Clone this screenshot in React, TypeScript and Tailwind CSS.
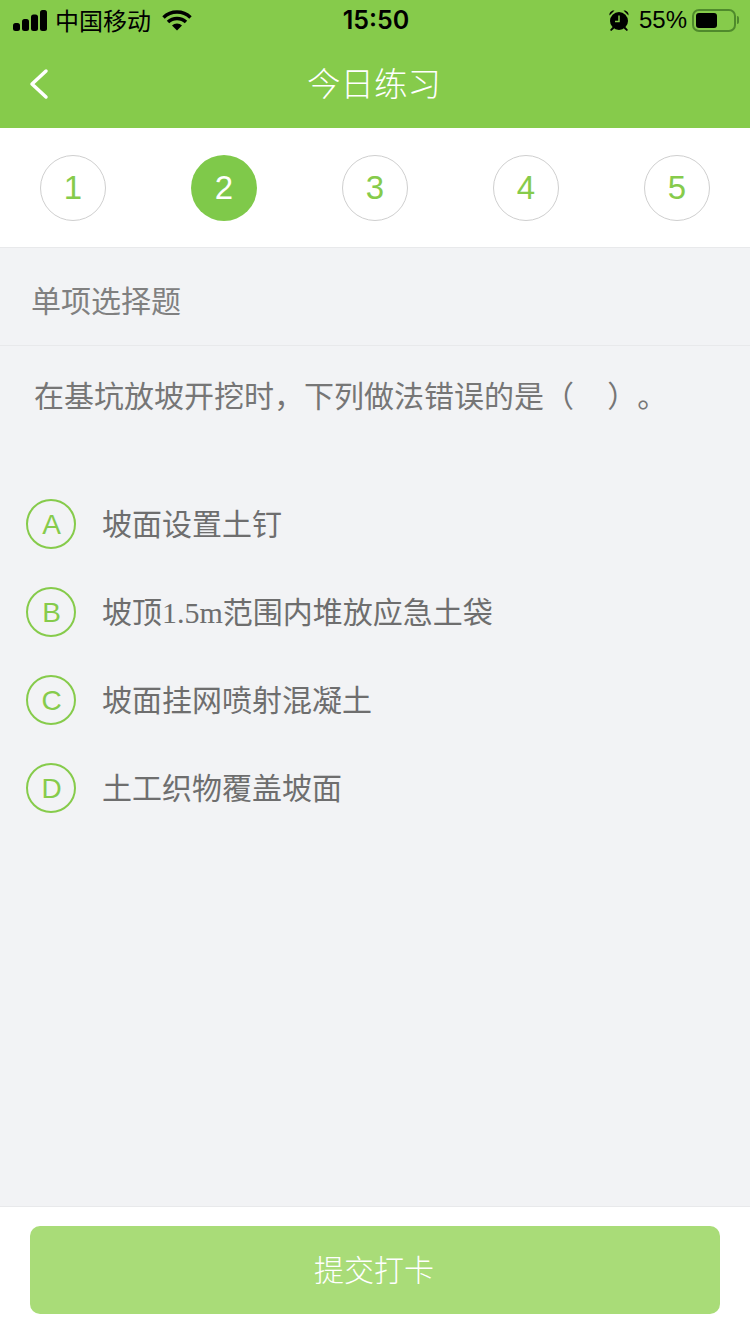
const sans = "font-['Liberation_Sans','Noto_Sans_CJK_SC',sans-serif]";

const StatusBar = () => (
  <div className="flex items-center justify-between h-10 pl-[13px] pr-[11px] text-black">
    <div className="flex items-center flex-1">
      <svg width="34" height="21" viewBox="0 0 34 21" fill="currentColor">
        <rect x="0" y="13" width="7" height="8" rx="2.500" />
        <rect x="9" y="9" width="7" height="12" rx="2.500" />
        <rect x="18" y="4.500" width="7" height="16.500" rx="2.500" />
        <rect x="27" y="0" width="7" height="21" rx="2.500" />
      </svg>
      <span className="ml-2 text-[24px] leading-none font-['Noto_Sans_CJK_SC',sans-serif]">中国移动</span>
      <svg className="ml-[11px]" width="30" height="22" viewBox="0 0 30 22" fill="none" stroke="currentColor">
        <path d="M1.500 8.500a19.500 19.500 0 0 1 27 0" strokeWidth="3.500" />
        <path d="M6 13a13 13 0 0 1 18 0" strokeWidth="3.500" />
        <path d="M15 21.500 10 16.500a7 7 0 0 1 10 0Z" fill="currentColor" stroke="none" />
      </svg>
    </div>
    <span className="pt-[1px] text-[25px] font-semibold leading-none font-['Inter',sans-serif]">15:50</span>
    <div className="flex items-center justify-end flex-1">
      <svg width="22" height="22" viewBox="0 0 22 22" fill="currentColor">
        <circle cx="11" cy="12" r="9" />
        <path d="M1.500 6.500C1 3.500 3.500 1 6.500 1.500ZM20.500 6.500C21 3.500 18.500 1 15.500 1.500ZM4.500 18l-2.500 3 1.200 1 3-2.500ZM17.500 18l2.500 3-1.200 1-3-2.500Z" />
        <path d="M11 6.500V12.500H7" fill="none" stroke="#86cb4b" strokeWidth="1.500" />
      </svg>
      <span className="ml-[9px] text-[24px] leading-none font-['Liberation_Sans',sans-serif]">55%</span>
      <div className="ml-[5px] flex items-center">
        <div className="w-[44px] h-[23px] rounded-[7px] border-2 border-[#4f8a2c] p-[2px]">
          <div className="w-[21px] h-full rounded-[3px] bg-black" />
        </div>
        <div className="ml-[1px] w-[2px] h-[8px] rounded-r-sm bg-[#4f8a2c]" />
      </div>
    </div>
  </div>
);

const Header = () => (
  <div className="bg-[#86cb4b] h-32 shrink-0">
    <StatusBar />
    <div className="relative flex items-center justify-center h-[88px] pt-[2px] pr-[2px]">
      <svg className="absolute left-[29px] top-[28px]" width="20" height="32" viewBox="0 0 20 32" fill="none" stroke="white" strokeWidth="3.500" strokeLinecap="round" strokeLinejoin="round">
        <path d="M17 3 3 16l14 13" />
      </svg>
      <h1 className="text-[33.500px] leading-none text-white font-light">今日练习</h1>
    </div>
  </div>
);

const steps = [1, 2, 3, 4, 5];

const Steps = () => (
  <div className="flex items-center justify-between h-[120px] shrink-0 px-10 bg-white border-b border-[#e8e9eb]">
    {steps.map((n) => (
      <div
        key={n}
        className={
          n === 2
            ? "flex items-center justify-center w-[66px] h-[66px] rounded-full bg-[#7fc94a] text-white text-[33px] font-['Liberation_Sans',sans-serif]"
            : "flex items-center justify-center w-[66px] h-[66px] rounded-full border border-[#cfcfcf] text-[#86cb4b] text-[33px] font-['Liberation_Sans',sans-serif]"
        }
      >
        {n}
      </div>
    ))}
  </div>
);

const options = [
  { key: "A", text: <>坡面设置土钉</> },
  {
    key: "B",
    text: (
      <>
        坡顶<span className="font-['Liberation_Serif',serif]">1.5m</span>范围内堆放应急土袋
      </>
    ),
  },
  { key: "C", text: <>坡面挂网喷射混凝土</> },
  { key: "D", text: <>土工织物覆盖坡面</> },
];

export default function App() {
  return (
    <div className={`flex flex-col w-[750px] h-[1334px] bg-[#f2f3f5] overflow-hidden ${sans}`}>
      <Header />
      <Steps />
      <div className="flex items-center h-[98px] shrink-0 pl-[31px] pt-[10px] border-b border-[#e8e9eb] text-[30px] text-[#808080]">
        单项选择题
      </div>
      <p className="pl-[34px] pt-[31px] text-[30px] leading-[40px] text-[#767676] [text-spacing-trim:space-all]">
        在基坑放坡开挖时，下列做法错误的是（&nbsp;&nbsp;&nbsp;&nbsp;）。
      </p>
      <div className="flex-1 pt-[63px] pl-[26px]">
        {options.map((o) => (
          <div key={o.key} className="flex items-center h-[88px] gap-[26px]">
            <div className="flex items-center justify-center w-[50px] h-[50px] pt-[2px] pl-[1px] rounded-full border-2 border-[#86cb4b] text-[#86cb4b] text-[28px] font-['Liberation_Sans',sans-serif]">
              {o.key}
            </div>
            <span className="text-[30px] text-[#6e6e6e]">{o.text}</span>
          </div>
        ))}
      </div>
      <div className="h-[128px] shrink-0 px-[30px] pt-[19px] bg-white border-t border-[#e8e9eb]">
        <button className="w-full h-[88px] pr-[2px] rounded-[10px] bg-[#a9dc78] text-white text-[30px] font-light">
          提交打卡
        </button>
      </div>
    </div>
  );
}
